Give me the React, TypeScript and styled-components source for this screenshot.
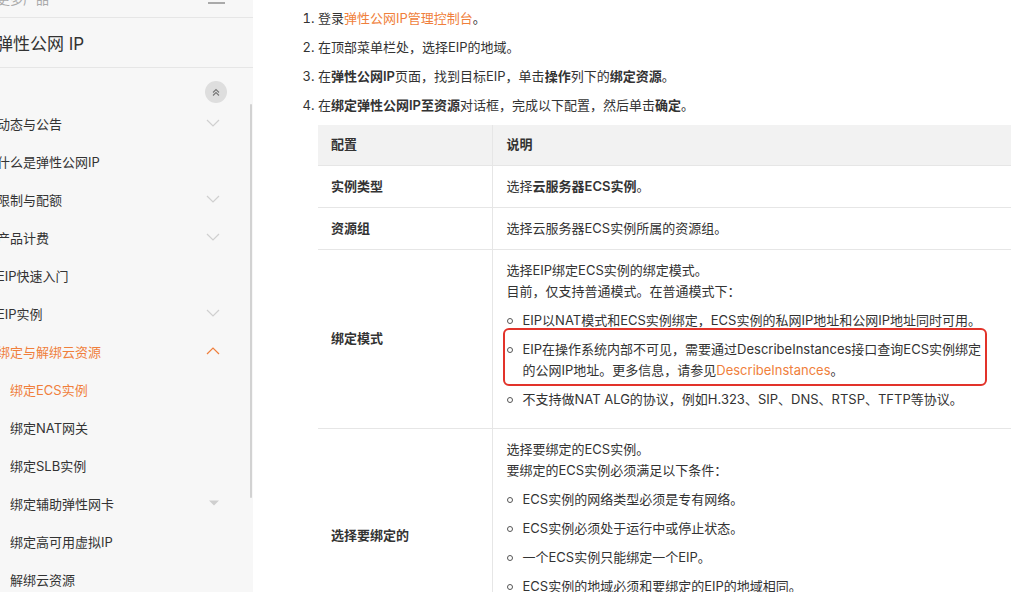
import React from "react";
import styled, { createGlobalStyle } from "styled-components";

const orange = "#f07f3c";
const line = "#e6e6e6";

const GlobalStyle = createGlobalStyle`
    html, body {
        margin: 0;
        padding: 0;
        background: #fff;
        overflow: hidden;
    }
    body {
        font-family: Inter, "Noto Sans CJK SC", sans-serif;
        font-size: 13px;
        color: #333;
    }
`;

const Page = styled.div`
    display: flex;
    width: 1024px;
    height: 592px;
    overflow: hidden;
`;

const Sidebar = styled.aside`
    position: relative;
    width: 253px;
    flex-shrink: 0;
    background: #f7f7f7;
    overflow: hidden;
    display: flex;
    flex-direction: column;
`;

const SidebarTop = styled.div`
    box-sizing: border-box;
    height: 34px;
    margin-top: -16px;
    padding: 0 28px 4px 0;
    display: flex;
    align-items: center;
    justify-content: space-between;
    border-bottom: 1px solid ${line};
    flex-shrink: 0;
`;

const TopText = styled.span`
    margin-left: -3px;
    color: #aaa;
    font-size: 13px;
`;

const Hamburger = styled.div`
    display: flex;
    flex-direction: column;
    gap: 4px;
    width: 17px;
    margin-top: -2px;

    span {
        display: block;
        height: 1.5px;
        background: #aaa;
    }
`;

const ProductTitle = styled.div`
    box-sizing: border-box;
    height: 50px;
    display: flex;
    align-items: center;
    margin-left: -4px;
    font-size: 17px;
    color: #333;
    border-bottom: 1px solid ${line};
    flex-shrink: 0;
`;

const CollapseRow = styled.div`
    box-sizing: border-box;
    height: 36px;
    padding: 13px 26px 0 0;
    display: flex;
    justify-content: flex-end;
    flex-shrink: 0;
`;

const CollapseButton = styled.span`
    width: 22px;
    height: 22px;
    border-radius: 50%;
    background: #dedede;
    display: flex;
    align-items: center;
    justify-content: center;
`;

const Menu = styled.ul`
    list-style: none;
    margin: 0 0 0 -3px;
    padding: 0;
`;

const MenuItem = styled.li<{ $level: number; $active?: boolean }>`
    box-sizing: border-box;
    height: 38px;
    display: flex;
    align-items: center;
    justify-content: space-between;
    padding-left: ${props => (props.$level === 2 ? 13 : 0)}px;
    padding-right: 33px;
    color: ${props => (props.$active ? orange : "#333")};
    font-size: 13px;
    white-space: nowrap;
`;

const ScrollThumb = styled.div`
    position: absolute;
    top: 104px;
    right: 1px;
    width: 2px;
    height: 394px;
    border-radius: 1px;
    background: #d2d2d2;
`;

const Main = styled.main`
    flex: 1;
    padding-top: 4px;
    overflow: hidden;
`;

const Steps = styled.ol`
    margin: 0;
    padding: 0 13px 0 65px;
`;

const Step = styled.li`
    line-height: 29px;
`;

const Link = styled.span`
    color: ${orange};
`;

const Strong = styled.b`
    font-weight: 600;
`;

const Table = styled.table`
    width: 100%;
    margin-top: 5px;
    border-collapse: collapse;
    table-layout: fixed;
    line-height: 21px;
`;

const HeadCell = styled.th<{ $first?: boolean }>`
    height: 40px;
    padding: 0 ${props => (props.$first ? 13 : 14)}px;
    background: #f2f2f2;
    text-align: left;
    font-weight: 600;
    border-bottom: 1px solid ${line};
    border-left: ${props => (props.$first ? "none" : `1px solid ${line}`)};
    width: ${props => (props.$first ? "174px" : "auto")};
    box-sizing: border-box;
`;

const Row = styled.tr<{ $height?: number }>`
    height: ${props => (props.$height ? `${props.$height}px` : "auto")};
`;

const LabelCell = styled.td`
    padding: 10px 13px;
    font-weight: 600;
    vertical-align: middle;
    border-bottom: 1px solid ${line};
`;

const DescCell = styled.td`
    padding: 10px 6px 10px 14px;
    vertical-align: top;
    border-bottom: 1px solid ${line};
    border-left: 1px solid ${line};
`;

const Para = styled.div`
    line-height: 21px;
`;

const BulletList = styled.ul`
    list-style: none;
    margin: 0 0 8px;
    padding: 0;
`;

const Bullet = styled.li<{ $marked?: boolean }>`
    position: relative;
    margin-top: 8px;
    padding-left: 16px;
    line-height: 21px;
    width: ${props => (props.$marked ? "fit-content" : "auto")};

    &::before {
        content: "";
        position: absolute;
        left: 0;
        top: 8px;
        width: 4px;
        height: 4px;
        border: 1px solid #555;
        border-radius: 50%;
    }
`;

const Highlight = styled.span`
    position: absolute;
    left: -4px;
    right: -6px;
    top: -11px;
    bottom: -5px;
    border: 2px solid #e2332a;
    border-radius: 6px;
    pointer-events: none;
`;

type MenuIcon = "down" | "up" | "caret";

interface MenuEntry {
    label: string;
    level: number;
    icon?: MenuIcon;
    active?: boolean;
}

const menu: MenuEntry[] = [
    { label: "动态与公告", level: 1, icon: "down" },
    { label: "什么是弹性公网IP", level: 1 },
    { label: "限制与配额", level: 1, icon: "down" },
    { label: "产品计费", level: 1, icon: "down" },
    { label: "EIP快速入门", level: 1 },
    { label: "EIP实例", level: 1, icon: "down" },
    { label: "绑定与解绑云资源", level: 1, icon: "up", active: true },
    { label: "绑定ECS实例", level: 2, active: true },
    { label: "绑定NAT网关", level: 2 },
    { label: "绑定SLB实例", level: 2 },
    { label: "绑定辅助弹性网卡", level: 2, icon: "caret" },
    { label: "绑定高可用虚拟IP", level: 2 },
    { label: "解绑云资源", level: 2 },
];

const ItemIcon = ({ icon }: { icon: MenuIcon }) => {
    if (icon === "caret") {
        return (
            <svg width="12" height="6" viewBox="0 0 12 6">
                <path d="M1 0.5 L11 0.5 L6 5.5 Z" fill="#cfcfcf" />
            </svg>
        );
    }
    const up = icon === "up";
    return (
        <svg width="14" height="8" viewBox="0 0 14 8">
            <path
                d={up ? "M1 7 L7 1 L13 7" : "M1 1 L7 7 L13 1"}
                fill="none"
                stroke={up ? orange : "#d0d0d0"}
                strokeWidth="1.2"
            />
        </svg>
    );
};

const App = () => {
    return (
        <>
            <GlobalStyle />
            <Page>
                <Sidebar>
                    <SidebarTop>
                        <TopText>更多产品</TopText>
                        <Hamburger>
                            <span />
                            <span />
                            <span />
                        </Hamburger>
                    </SidebarTop>
                    <ProductTitle>弹性公网 IP</ProductTitle>
                    <CollapseRow>
                        <CollapseButton>
                            <svg width="10" height="9" viewBox="0 0 10 9">
                                <path
                                    d="M2 4.5 L5 1.5 L8 4.5 M2 7.5 L5 4.5 L8 7.5"
                                    fill="none"
                                    stroke="#777"
                                    strokeWidth="1.1"
                                />
                            </svg>
                        </CollapseButton>
                    </CollapseRow>
                    <Menu>
                        {menu.map(item => (
                            <MenuItem key={item.label} $level={item.level} $active={item.active}>
                                <span>{item.label}</span>
                                {item.icon && <ItemIcon icon={item.icon} />}
                            </MenuItem>
                        ))}
                    </Menu>
                    <ScrollThumb />
                </Sidebar>

                <Main>
                    <Steps>
                        <Step>
                            登录<Link>弹性公网IP管理控制台</Link>。
                        </Step>
                        <Step>在顶部菜单栏处，选择EIP的地域。</Step>
                        <Step>
                            在<Strong>弹性公网IP</Strong>页面，找到目标EIP，单击<Strong>操作</Strong>列下的
                            <Strong>绑定资源</Strong>。
                        </Step>
                        <Step>
                            在<Strong>绑定弹性公网IP至资源</Strong>对话框，完成以下配置，然后单击
                            <Strong>确定</Strong>。
                            <Table>
                                <thead>
                                    <tr>
                                        <HeadCell $first>配置</HeadCell>
                                        <HeadCell>说明</HeadCell>
                                    </tr>
                                </thead>
                                <tbody>
                                    <Row>
                                        <LabelCell>实例类型</LabelCell>
                                        <DescCell>
                                            选择<Strong>云服务器ECS实例</Strong>。
                                        </DescCell>
                                    </Row>
                                    <Row>
                                        <LabelCell>资源组</LabelCell>
                                        <DescCell>选择云服务器ECS实例所属的资源组。</DescCell>
                                    </Row>
                                    <Row>
                                        <LabelCell>绑定模式</LabelCell>
                                        <DescCell>
                                            <Para>选择EIP绑定ECS实例的绑定模式。</Para>
                                            <Para>目前，仅支持普通模式。在普通模式下：</Para>
                                            <BulletList>
                                                <Bullet>
                                                    EIP以NAT模式和ECS实例绑定，ECS实例的私网IP地址和公网IP地址同时可用。
                                                </Bullet>
                                                <Bullet $marked>
                                                    EIP在操作系统内部不可见，需要通过DescribeInstances接口查询ECS实例绑定
                                                    <br />
                                                    的公网IP地址。更多信息，请参见
                                                    <Link>DescribeInstances</Link>。
                                                    <Highlight />
                                                </Bullet>
                                                <Bullet>
                                                    不支持做NAT ALG的协议，例如H.323、SIP、DNS、RTSP、TFTP等协议。
                                                </Bullet>
                                            </BulletList>
                                        </DescCell>
                                    </Row>
                                    <Row $height={214}>
                                        <LabelCell>选择要绑定的</LabelCell>
                                        <DescCell>
                                            <Para>选择要绑定的ECS实例。</Para>
                                            <Para>要绑定的ECS实例必须满足以下条件：</Para>
                                            <BulletList>
                                                <Bullet>ECS实例的网络类型必须是专有网络。</Bullet>
                                                <Bullet>ECS实例必须处于运行中或停止状态。</Bullet>
                                                <Bullet>一个ECS实例只能绑定一个EIP。</Bullet>
                                                <Bullet>ECS实例的地域必须和要绑定的EIP的地域相同。</Bullet>
                                            </BulletList>
                                        </DescCell>
                                    </Row>
                                </tbody>
                            </Table>
                        </Step>
                    </Steps>
                </Main>
            </Page>
        </>
    );
};

export default App;
